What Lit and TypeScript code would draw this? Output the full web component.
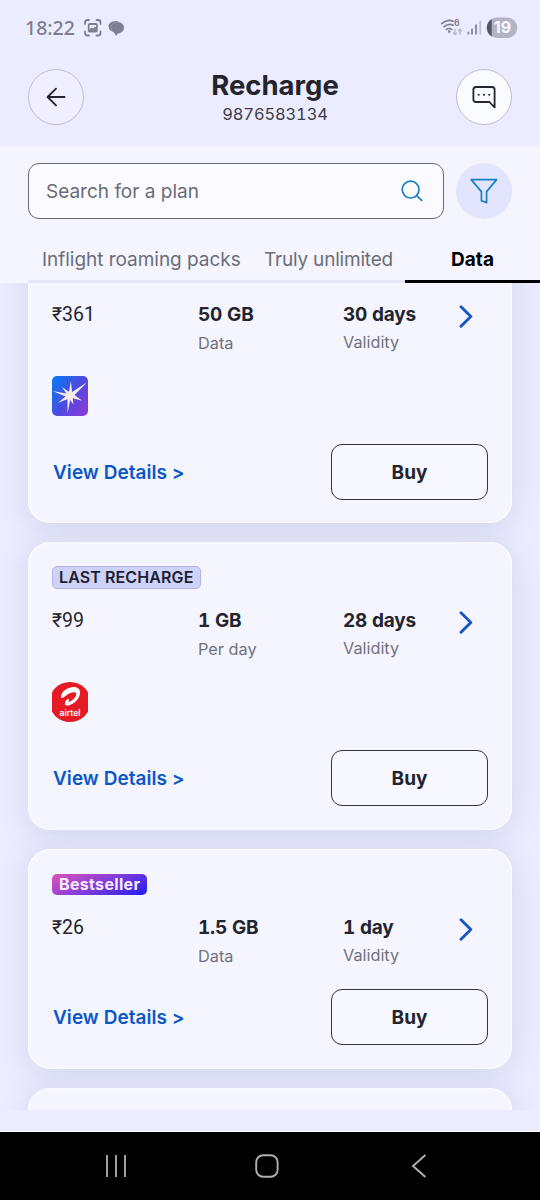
import { LitElement, html, css, nothing } from "lit";
import { customElement, property } from "lit/decorators.js";

type Badge = { text: string; kind: "last" | "best" };
type Plan = {
  price: string;
  amount: string;
  unit: string;
  days: string;
  logo?: "star" | "airtel";
  badge?: Badge;
};

const plans: Plan[] = [
  { price: "₹361", amount: "50 GB", unit: "Data", days: "30 days", logo: "star" },
  { price: "₹99", amount: "1 GB", unit: "Per day", days: "28 days", logo: "airtel", badge: { text: "LAST RECHARGE", kind: "last" } },
  { price: "₹26", amount: "1.5 GB", unit: "Data", days: "1 day", badge: { text: "Bestseller", kind: "best" } },
];

const starLogo = html`<svg width="36" height="40" viewBox="0 0 36 40">
  <defs>
    <linearGradient id="g" x1="0" y1="0.1" x2="1" y2="0.9">
      <stop offset="0" stop-color="#0a78f5" />
      <stop offset="0.5" stop-color="#4a4ce0" />
      <stop offset="1" stop-color="#8f38d8" />
    </linearGradient>
  </defs>
  <rect width="36" height="40" rx="5" fill="url(#g)" />
  <path fill="#f3ece8" d="M18.8 5 L20.2 16 L35 6.2 L22.6 19 L30.2 24.8 L20.8 22.2 L21.4 28.6 L18.2 24 L15.6 37 L15.4 23.2 L6 26.8 L13.6 20.4 L0.6 15 L14.4 17.4 L10 11.2 L17 15.8 Z" />
</svg>`;

const airtelLogo = html`<svg width="36" height="40" viewBox="0 0 36 40">
  <defs><clipPath id="c"><rect width="36" height="40" rx="2" /></clipPath></defs>
  <ellipse cx="18" cy="20" rx="20.5" ry="20" fill="#e41b24" clip-path="url(#c)" />
  <path fill="#fff" d="M9 14.4 C9.6 8.6 17 4.6 22.6 5 C28.6 5.6 29.6 11.4 26.2 16.4 C23.2 20.8 17.6 23.8 14.4 23.6 C12.4 23.4 12.6 20.8 14 18.6 C15 17.2 16.8 16.6 17 17.4 C17.2 18.2 15.8 19.6 16.8 19.8 C19.4 19.8 24.6 15.2 24.2 11.8 C23.6 9 17.6 10.6 13.8 13.8 C11.6 15.8 9 17 9 14.4 Z" />
  <text x="18" y="34.3" text-anchor="middle" textLength="21" lengthAdjust="spacingAndGlyphs"
    font-family="Inter, sans-serif" font-size="8.5" font-weight="600" fill="#fff">airtel</text>
</svg>`;

@customElement("plan-card")
export class PlanCard extends LitElement {
  @property({ attribute: false }) plan!: Plan;

  static styles = css`
    :host {
      display: block;
      box-sizing: border-box;
      flex: none;
      padding: 24px;
      border-radius: 22px;
      background: #f4f5ff;
      box-shadow: inset 0 0 0 1.5px #fafbff, 0 4px 30px rgba(70, 80, 120, 0.15);
      color: #23242e;
      font-family: Inter, sans-serif;
    }
    .badges { height: 23px; display: flex; align-items: center; }
    .badge {
      box-sizing: border-box;
      border-radius: 5px;
      font-size: 16px;
      line-height: 20px;
      white-space: nowrap;
      font-weight: 700;
    }
    .last {
      width: 149px;
      padding: 0 6px;
      border: 1.5px solid #b3b5e2;
      background: #cfd2f8;
      color: #1d1e30;
      font-weight: 600;
      letter-spacing: 0.1px;
      height: 23px;
    }
    .best {
      width: 95px;
      height: 21px;
      padding: 0 7px;
      background: linear-gradient(155deg, #e052b8 0%, #8b3fd6 45%, #2a20ee 95%);
      color: #f7eafc;
      letter-spacing: 0.32px;
      line-height: 21px;
    }
    .info {
      display: grid;
      grid-template-columns: 146px 145px 1fr;
      height: 56px;
      margin-top: 17px;
    }
    .price { font: 400 19.5px/26px Roboto, sans-serif; padding-top: 2px; }
    .value { font-size: 19px; font-weight: 700; line-height: 29px; white-space: nowrap; font-variant-numeric: tabular-nums; letter-spacing: -0.2px; }
    .label { font-size: 16.3px; line-height: 28px; color: #717280; }
    .up { margin-top: -1px; }
    .validity { display: flex; justify-content: space-between; padding-right: 15px; }
    .chev { margin-top: 5px; }
    .logo { height: 40px; margin-top: 20px; }
    .logo svg { display: block; }
    .actions {
      display: flex;
      justify-content: space-between;
      align-items: center;
      margin-top: 20px;
    }
    .spaced { margin-top: 28px; }
    .details { padding-left: 1px; font-size: 19px; font-weight: 600; color: #0c57c6; white-space: nowrap; letter-spacing: 0.04px; }
    .buy {
      box-sizing: border-box;
      width: 157px;
      height: 56px;
      border: 1.5px solid #33343f;
      border-radius: 11px;
      background: #f6f7ff;
      color: #23242e;
      font: 700 19px Inter, sans-serif;
      padding: 0;
    }
  `;

  render() {
    const p = this.plan;
    if (!p) return nothing;
    return html`
      <div class="badges">
        ${p.badge ? html`<span class="badge ${p.badge.kind}">${p.badge.text}</span>` : nothing}
      </div>
      <div class="info">
        <div class="price">${p.price}</div>
        <div><div class="value">${p.amount}</div><div class="label">${p.unit}</div></div>
        <div class="validity">
          <div><div class="value">${p.days}</div><div class="label up">Validity</div></div>
          <svg class="chev" width="14" height="23" viewBox="0 0 14 23">
            <path d="M2 1.8 L11.8 11.5 L2 21.2" fill="none" stroke="#1557c8" stroke-width="2.9" stroke-linecap="round" stroke-linejoin="round" />
          </svg>
        </div>
      </div>
      ${p.logo ? html`<div class="logo">${p.logo === "star" ? starLogo : airtelLogo}</div>` : nothing}
      <div class="actions ${p.logo ? "spaced" : ""}">
        <span class="details">View Details &gt;</span>
        <button class="buy">Buy</button>
      </div>
    `;
  }
}

@customElement("app-root")
export class AppRoot extends LitElement {
  static styles = css`
    :host {
      display: flex;
      flex-direction: column;
      width: 540px;
      height: 1200px;
      overflow: hidden;
      background: #ebecff;
      font-family: Inter, sans-serif;
      color: #23242e;
    }
    svg { display: block; }
    .status {
      display: flex;
      align-items: center;
      height: 56px;
      padding: 0 22px 0 25px;
      color: #7d7e8e;
      flex: none;
    }
    .time { font: 500 19.5px/26px "Noto Sans", sans-serif; width: 58px; }
    .grow { flex: 1; }
    .header {
      display: flex;
      justify-content: space-between;
      align-items: flex-start;
      height: 77px;
      padding: 13px 28px 0;
      flex: none;
    }
    .round {
      box-sizing: border-box;
      width: 56px;
      height: 56px;
      border: 1.4px solid #bcbdcc;
      border-radius: 50%;
      display: grid;
      place-items: center;
    }
    .white { background: #fafbff; }
    .pale { background: #efefff; }
    .titles { text-align: center; padding-left: 10px; }
    .title { margin: -1px 0 0; font-size: 27.5px; line-height: 34px; font-weight: 700; }
    .phone { font-size: 16.5px; line-height: 20px; margin-top: 2px; color: #3c3d49; letter-spacing: -0.15px; font-variant-numeric: tabular-nums; }
    .panel { background: #f4f5ff; height: 137px; flex: none; box-sizing: border-box; padding-top: 17px; display: flex; flex-direction: column; justify-content: space-between; }
    .searchrow { display: flex; gap: 12px; padding: 0 28px 0 28px; }
    .search {
      box-sizing: border-box;
      width: 416px;
      height: 56px;
      border: 1.5px solid #676876;
      border-radius: 11px;
      background: #fbfbff;
      display: flex;
      align-items: center;
      justify-content: space-between;
      padding: 0 20px 0 17px;
      font-size: 19px;
      color: #6a6b76;
    }
    .filter { width: 56px; height: 56px; border-radius: 50%; background: #e3e4fd; display: grid; place-items: center; }
    .tabs { display: flex; margin-left: 28px; height: 50px; font-size: 19px; color: #6c6d79; white-space: nowrap; }
    .tab { box-sizing: border-box; border-bottom: 3px solid #e4e5f5; line-height: 54px; height: 50px; }
    .t1 { width: 236px; padding-left: 14px; letter-spacing: -0.03px; }
    .t2 { width: 141px; letter-spacing: -0.2px; }
    .active { flex: 1; border-color: #000; color: #000; font-weight: 700; text-align: center; }
    .list {
      height: 827px;
      flex: none;
      box-sizing: border-box;
      overflow: hidden;
      display: flex;
      flex-direction: column;
      gap: 19px;
      padding: 0 28px;
    }
    .first { margin-top: -47px; padding-bottom: 23px; }
    .peek { flex: none; height: 80px; border-radius: 22px; background: #f4f5ff; box-shadow: inset 0 0 0 1.5px #fafbff, 0 4px 30px rgba(70, 80, 120, 0.15); }
    .strip { height: 21px; flex: none; background: #ebecff; border-bottom: 1px solid #fff; }
    .nav { flex: 1; background: #000; display: flex; justify-content: space-between; align-items: center; padding: 0 113px 0 105px; }
    .home { margin-right: 4px; }
  `;

  render() {
    return html`
      <div class="status">
        <span class="time">18:22</span>
        <svg width="44" height="20" viewBox="0 0 44 20">
          <g fill="none" stroke="#7d7e8e" stroke-width="1.8" stroke-linecap="round">
            <path d="M2 6 V4.5 Q2 2 4.5 2 H6 M13.5 2 H15 Q17.5 2 17.5 4.5 V6 M17.5 13.5 V15 Q17.5 17.5 15 17.5 H13.5 M6 17.5 H4.5 Q2 17.5 2 15 V13.5" />
            <rect x="5.7" y="6" width="8.2" height="7.6" rx="1.2" />
          </g>
          <path d="M6 12 L8.5 9.5 L10 10.5 L12 8.5 L14 10.5 V13.5 H6 Z" fill="#7d7e8e" />
          <ellipse cx="32.5" cy="8.5" rx="7" ry="5.6" fill="#7d7e8e" />
          <ellipse cx="34.5" cy="9.8" rx="6.6" ry="5.6" fill="#7d7e8e" stroke="#b0b1c0" stroke-width=".5" />
          <path d="M30.5 13 L33.2 18 L35.5 14 Z" fill="#7d7e8e" />
        </svg>
        <span class="grow"></span>
        <svg width="78" height="22" viewBox="0 0 78 22">
          <g fill="none" stroke="#7d7e8e" stroke-width="1.7" stroke-linecap="round">
            <path d="M1.8 6.6 Q7.5 1.6 13 4.2 M4 9.6 Q8.8 5.8 13.2 8.2 M6.4 12.4 Q9 10.6 11.8 12.4" />
          </g>
          <circle cx="9.2" cy="14.6" r="1.3" fill="#7d7e8e" />
          <text x="14" y="9.2" font-family="Inter, sans-serif" font-size="8.5" font-weight="700" fill="#7d7e8e">6</text>
          <path d="M15 12 V17.4 M13 15.6 L15 17.6 L17 15.6 M20 17.8 V12.4 M18 14.2 L20 12.2 L22 14.2" fill="none" stroke="#b5b6c6" stroke-width="1.3" />
          <g stroke="#7d7e8e" stroke-width="1.7">
            <path d="M28.4 14.8 V17.6 M32 11.8 V17.6 M36 7.6 V17.6" />
            <path d="M40.2 3.8 V17.6" stroke="#bdbecd" />
          </g>
          <path d="M57 0.5 H67 a10.3 10.3 0 0 1 0 20.6 H57 a10.3 10.3 0 0 1 0 -20.6 Z" fill="#b3b4c3" />
          <path d="M51.7 2 V19.6 A10.3 10.3 0 0 1 51.7 2 Z" fill="#555665" />
          <text x="62.4" y="16.4" text-anchor="middle" font-family="Inter, sans-serif" font-size="16" font-weight="700" fill="#f7f7ff">19</text>
        </svg>
      </div>
      <div class="header">
        <div class="round pale">
          <svg width="20" height="20" viewBox="0 0 20 20" fill="none" stroke="#23242e" stroke-width="1.8" stroke-linecap="round" stroke-linejoin="round">
            <path d="M18.6 10 H1.8 M10 1.6 L1.6 10 L10 18.4" />
          </svg>
        </div>
        <div class="titles">
          <h1 class="title">Recharge</h1>
          <div class="phone">9876583134</div>
        </div>
        <div class="round white">
          <svg width="24" height="24" viewBox="0 0 24 24" fill="none" stroke="#23242e" stroke-width="1.8" stroke-linejoin="round">
            <path d="M4 2 H20 Q22.6 2 22.6 4.6 V22.4 L17.4 17 H4 Q1.4 17 1.4 14.4 V4.6 Q1.4 2 4 2 Z" />
            <path d="M6.6 9.7 h.1 M12 9.7 h.1 M17.2 9.7 h.1" stroke-width="2" stroke-linecap="round" />
          </svg>
        </div>
      </div>
      <div class="panel">
        <div class="searchrow">
          <div class="search">
            <span>Search for a plan</span>
            <svg width="22" height="22" viewBox="0 0 22 22" fill="none" stroke="#187fc4" stroke-width="1.7" stroke-linecap="round">
              <circle cx="9.6" cy="9.6" r="8.4" /><path d="M15.7 15.7 L20.6 20.4" />
            </svg>
          </div>
          <div class="filter">
            <svg width="28" height="28" viewBox="0 0 28 28" fill="none" stroke="#187fc8" stroke-width="1.7" stroke-linejoin="round">
              <path d="M1.2 2.6 H26.6 L16.6 14.6 V25.6 L11.4 23.8 V14.6 Z" />
            </svg>
          </div>
        </div>
        <div class="tabs">
          <div class="tab t1">Inflight roaming packs</div>
          <div class="tab t2">Truly unlimited</div>
          <div class="tab active">Data</div>
        </div>
      </div>
      <div class="list">
        ${plans.map((p, i) => html`<plan-card class=${i === 0 ? "first" : ""} .plan=${p}></plan-card>`)}
        <div class="peek"></div>
      </div>
      <div class="strip"></div>
      <div class="nav">
        <svg width="22" height="24" viewBox="0 0 22 24" stroke="#b0b0b0" stroke-width="1.8"><path d="M2 1 V23 M11 1 V23 M20 1 V23" /></svg>
        <svg class="home" width="24" height="24" viewBox="0 0 24 24" fill="none" stroke="#b0b0b0" stroke-width="1.9"><rect x="1.2" y="1.2" width="21.4" height="21.6" rx="7" /></svg>
        <svg width="16" height="24" viewBox="0 0 16 24" fill="none" stroke="#b0b0b0" stroke-width="1.9"><path d="M14.4 1 L2 12 L14.4 23" /></svg>
      </div>
    `;
  }
}
